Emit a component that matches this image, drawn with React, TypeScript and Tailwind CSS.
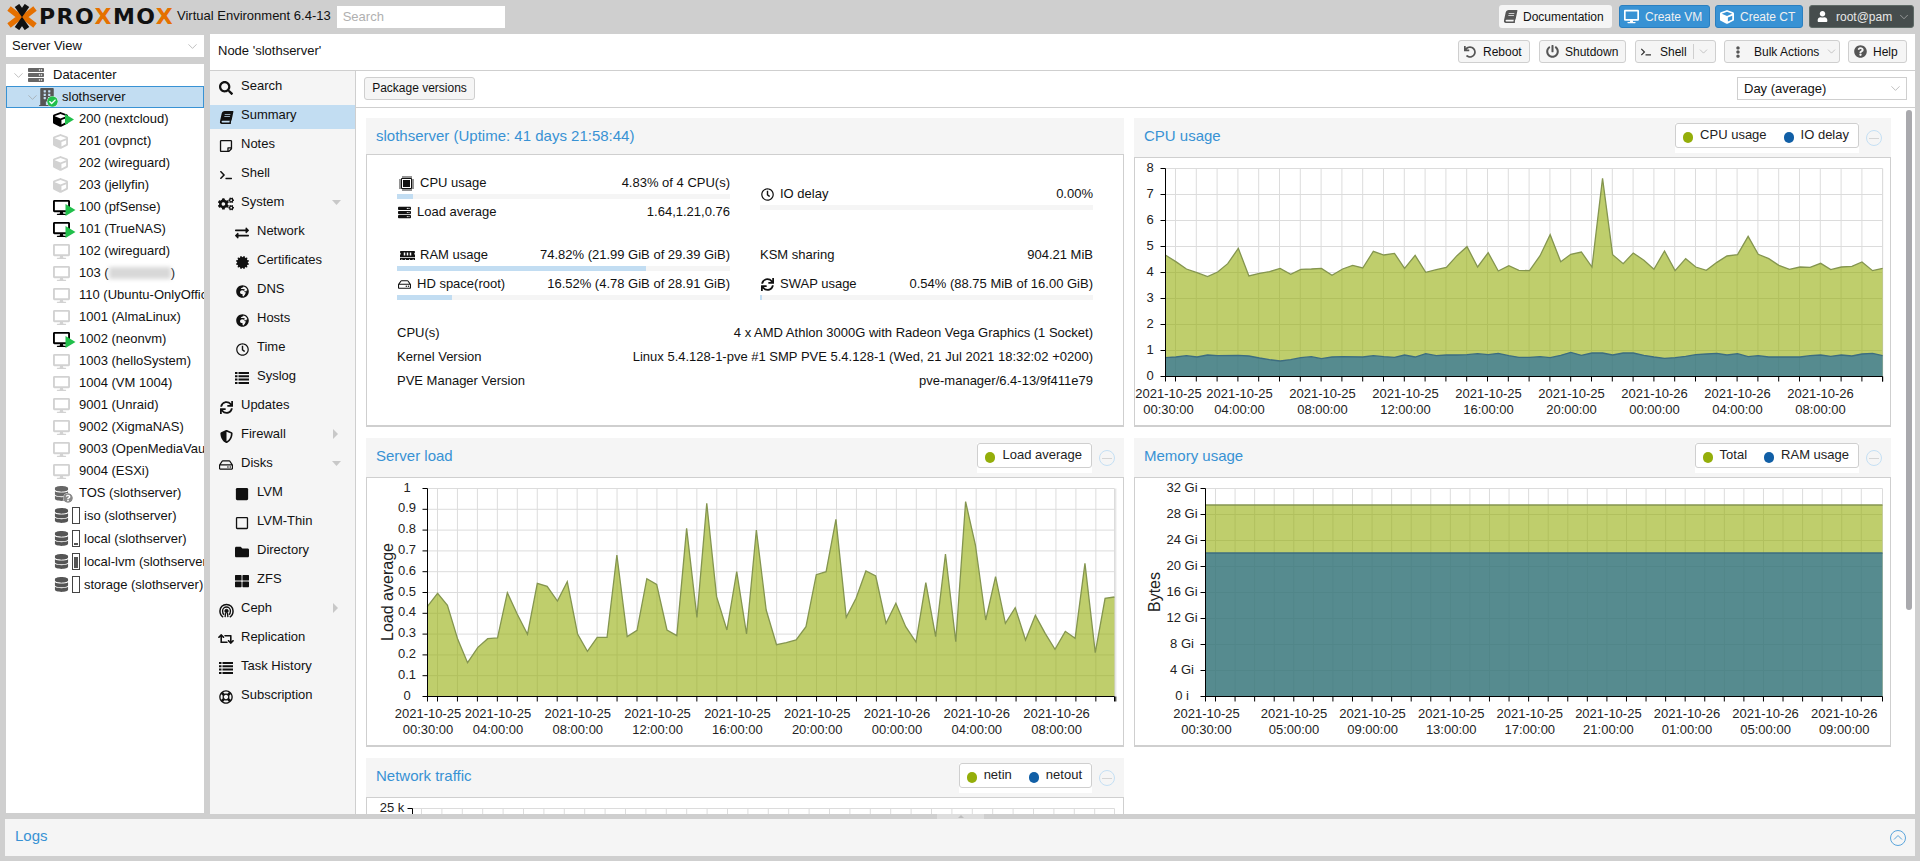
import React from "react";
import { ChevronDown } from "lucide-react";
import {
  FaBook, FaBuilding, FaCertificate, FaCheckCircle, FaCogs, FaCube, FaDatabase, FaDesktop, FaEllipsisV, FaExchangeAlt,
  FaFolder, FaGlobeAfrica, FaMemory, FaPowerOff, FaQuestionCircle, FaRegClock, FaRegHdd,
  FaRegSquare, FaRegStickyNote, FaRetweet, FaSearch, FaServer, FaShieldAlt, FaSquare, FaSync, FaTerminal, FaThLarge,
  FaUndo, FaUser, FaRegLifeRing,
} from "react-icons/fa";

const Chev = ({ className = "" }: { className?: string }) => (
  <ChevronDown size={15} strokeWidth={1} className={"text-[#9a9a9a] shrink-0 " + className} />
);

const Tri = ({ big }: { big?: boolean }) => (
  <svg width={big ? 11 : 9} height={big ? 12 : 11} viewBox="0 0 10 12" className={"absolute " + (big ? "left-[12px] top-[8px]" : "left-[12px] top-[6px]")}>
    <path d="M0 0L10 6L0 12Z" fill="#21bf4b" />
  </svg>
);

const Gauge = ({ fill }: { fill: number }) => (
  <span className="w-[8px] h-[17px] ml-[3px] mr-[4px] border border-[#444] flex flex-col justify-end p-px shrink-0">
    <span className="block bg-[#555] w-full" style={{ height: fill + "%" }} />
  </span>
);

const Row = ({ children, text }: { children: React.ReactNode; text: React.ReactNode }) => (
  <div className="h-[22px] flex items-center pl-[47px] whitespace-nowrap overflow-hidden text-[13px] text-[#111]">
    <span className="relative w-[26px] h-[22px] flex items-center shrink-0">{children}</span>
    <span>{text}</span>
  </div>
);

const CT = ({ on, text }: { on?: boolean; text: string }) => (
  <Row text={text}>
    <FaCube size={15} className={on ? "text-black" : "text-[#d2d2d2]"} />
    {on && <Tri />}
  </Row>
);
const VM = ({ on, text }: { on?: boolean; text: React.ReactNode }) => (
  <Row text={text}>
    <FaDesktop size={17} className={on ? "text-black" : "text-[#d2d2d2]"} />
    {on && <Tri big />}
  </Row>
);
const Store = ({ fill, text }: { fill: number; text: string }) => (
  <div className="h-[23px] flex items-center pl-[48px] whitespace-nowrap overflow-hidden text-[13px] text-[#111]">
    <FaDatabase size={15} className="text-[#555] shrink-0" />
    <Gauge fill={fill} />
    <span>{text}</span>
  </div>
);

function Tree() {
  return (
    <div className="flex-1 mt-[7px] bg-white overflow-hidden">
      <div className="h-[22px] flex items-center text-[13px] text-[#111]">
        <Chev className="ml-[5px]" />
        <FaServer size={16} className="ml-[2px] text-[#666]" />
        <span className="ml-[9px]">Datacenter</span>
      </div>
      <div className="h-[22px] flex items-center bg-[#c2ddf2] border border-[#3892d4] text-[13px] text-[#111]">
        <Chev className="ml-[18px]" />
        <span className="relative w-[24px] h-[20px] ml-[-2px] flex items-center shrink-0">
          <FaBuilding size={18} className="text-[#555]" />
          <FaCheckCircle size={11} className="absolute left-[9px] top-[9px] text-[#21bf4b] bg-white rounded-full" />
        </span>
        <span>slothserver</span>
      </div>
      <CT on text="200 (nextcloud)" />
      <CT text="201 (ovpnct)" />
      <CT text="202 (wireguard)" />
      <CT text="203 (jellyfin)" />
      <VM on text="100 (pfSense)" />
      <VM on text="101 (TrueNAS)" />
      <VM text="102 (wireguard)" />
      <VM text={<span className="flex items-center">103 (<span className="inline-block w-[62px] h-[12px] bg-[#d8d8d8] blur-[2px]" />)</span>} />
      <VM text="110 (Ubuntu-OnlyOffice)" />
      <VM text="1001 (AlmaLinux)" />
      <VM on text="1002 (neonvm)" />
      <VM text="1003 (helloSystem)" />
      <VM text="1004 (VM 1004)" />
      <VM text="9001 (Unraid)" />
      <VM text="9002 (XigmaNAS)" />
      <VM text="9003 (OpenMediaVault)" />
      <VM text="9004 (ESXi)" />
      <Row text="TOS (slothserver)">
        <FaDatabase size={15} className="text-[#666] ml-px" />
        <FaQuestionCircle size={10} className="absolute left-[10px] top-[11px] text-[#8a8a8a] bg-white rounded-full" />
      </Row>
      <Store fill={0} text="iso (slothserver)" />
      <Store fill={15} text="local (slothserver)" />
      <Store fill={85} text="local-lvm (slothserver)" />
      <Store fill={0} text="storage (slothserver)" />
    </div>
  );
}

const CephIcon = () => (
  <svg width="15" height="15" viewBox="0 0 16 16" fill="none" stroke="#111">
    <path d="M4.5 15C1.8 13.6 1 11 1 8.500a7 7 0 0 1 14 0C15 11 14.200 13.600 11.500 15" strokeWidth="1.600" />
    <path d="M5.500 12.500C4 11.500 3.800 10 3.800 8.500a4.200 4.200 0 0 1 8.400 0c0 1.500-.2 3-1.700 4" strokeWidth="1.500" />
    <circle cx="8" cy="8.500" r="1.800" fill="#111" />
    <path d="M7 10.500L6.500 15M9 10.500L9.500 15" strokeWidth="1.400" />
  </svg>
);

const ListIcon = () => (
  <svg width="14" height="12" viewBox="0 0 14 12" fill="#111">
    <path d="M0 0h2.500v2H0zM3.500 0H14v2H3.500zM0 3.300h2.500v2H0zM3.500 3.300H14v2H3.500zM0 6.600h2.500v2H0zM3.500 6.600H14v2H3.500zM0 9.900h2.500v2H0zM3.500 9.900H14v2H3.500z" />
  </svg>
);

const ChipIcon = () => (
  <svg width="15" height="15" viewBox="0 0 15 15">
    <path d="M2.500 2.500h10v10h-10z" fill="none" stroke="#111" strokeWidth="1" />
    <rect x="4" y="4" width="7" height="7" fill="#111" />
    <path d="M4 0v2.500M6 0v2.500M8 0v2.500M10 0v2.500M12 0v2.500M4 12.500V15M6 12.500V15M8 12.500V15M10 12.500V15M12 12.500V15M0 4h2.500M0 6h2.500M0 8h2.500M0 10h2.500M0 12h2.500M12.500 4H15M12.500 6H15M12.500 8H15M12.500 10H15M12.500 12H15" stroke="#111" strokeWidth="0.900" />
  </svg>
);

const menu: [number, React.ReactNode, string, string?][] = [
  [1, <FaSearch size={14} />, "Search"],
  [1, <FaBook size={13} className="-skew-x-[12deg]" />, "Summary"],
  [1, <FaRegStickyNote size={14} />, "Notes"],
  [1, <FaTerminal size={12} />, "Shell"],
  [1, <FaCogs size={16} />, "System", "down"],
  [2, <FaExchangeAlt size={14} />, "Network"],
  [2, <FaCertificate size={13} />, "Certificates"],
  [2, <FaGlobeAfrica size={13} />, "DNS"],
  [2, <FaGlobeAfrica size={13} />, "Hosts"],
  [2, <FaRegClock size={13} />, "Time"],
  [2, <ListIcon />, "Syslog"],
  [1, <FaSync size={13} />, "Updates"],
  [1, <FaShieldAlt size={13} />, "Firewall", "right"],
  [1, <FaRegHdd size={14} />, "Disks", "down"],
  [2, <FaSquare size={14} />, "LVM"],
  [2, <FaRegSquare size={14} />, "LVM-Thin"],
  [2, <FaFolder size={14} />, "Directory"],
  [2, <FaThLarge size={14} />, "ZFS"],
  [1, <CephIcon />, "Ceph", "right"],
  [1, <FaRetweet size={16} />, "Replication"],
  [1, <ListIcon />, "Task History"],
  [1, <FaRegLifeRing size={14} />, "Subscription"],
];

function Menu() {
  return (
    <div className="w-[146px] shrink-0 bg-[#f5f5f5] border-r border-[#cfcfcf] pt-[5px]">
      {menu.map(([lvl, icon, label, arrow]) => (
        <div
          key={label}
          className={
            "relative h-[24px] mb-[5px] flex items-start text-[13px] leading-[20px] text-[#111] " +
            (lvl === 1 ? "pl-[8px] " : "pl-[24px] ") +
            (label === "Summary" ? "bg-[#c2ddf2]" : "")
          }
        >
          <span className="w-[16px] h-[20px] mt-[2px] flex items-center justify-center shrink-0">{icon}</span>
          <span className="ml-[7px]">{label}</span>
          {arrow === "down" && (
            <svg width="9" height="5" viewBox="0 0 9 5" className="absolute left-[122px] top-[8px]">
              <path d="M0 0H9L4.500 5Z" fill="#c8c8c8" />
            </svg>
          )}
          {arrow === "right" && (
            <svg width="5" height="10" viewBox="0 0 5 10" className="absolute left-[123px] top-[5px]">
              <path d="M0 0V10L5 5Z" fill="#c8c8c8" />
            </svg>
          )}
        </div>
      ))}
    </div>
  );
}

const Btn = ({ w, children }: { w: string; children: React.ReactNode }) => (
  <div className={"h-[23px] flex items-center bg-[#f5f5f5] border border-[#cfcfcf] rounded-[3px] text-[12px] text-[#111] whitespace-nowrap " + w}>
    {children}
  </div>
);

type Cell = { icon?: React.ReactNode; label: string; value: string; pct?: number; gap?: string };

const Info = ({ icon, label, value, pct, gap }: Cell) => (
  <div className="w-[333px]">
    <div className="h-[20px] flex items-center text-[13px] text-[#111] whitespace-nowrap">
      {icon && <span className={"flex items-center shrink-0 " + (gap || "w-[20px] pl-px")}>{icon}</span>}
      <span>{label}</span>
      <span className="ml-auto">{value}</span>
    </div>
    {pct !== undefined && (
      <div className="h-[5px] mt-[1px] bg-[#f5f5f5]">
        <div className="h-full bg-[#c2ddf2]" style={{ width: pct + "%" }} />
      </div>
    )}
  </div>
);

function Summary() {
  return (
    <div className="flex-1 border border-[#cfcfcf] border-b-2 pt-[18px] px-[30px] bg-white">
      <div className="grid grid-cols-[333px_333px] gap-x-[30px] h-[72px]">
        <div className="flex flex-col gap-y-[3px]">
          <Info icon={<ChipIcon />} gap="w-[23px] pl-[2px]" label="CPU usage" value="4.83% of 4 CPU(s)" pct={4.83} />
          <Info icon={<FaServer size={13} />} label="Load average" value="1.64,1.21,0.76" />
        </div>
        <div className="pt-[11px]">
          <Info icon={<FaRegClock size={13} />} label="IO delay" value="0.00%" pct={0} />
        </div>
      </div>
      <div className="grid grid-cols-[333px_333px] gap-x-[30px] h-[76px]">
        <div className="flex flex-col gap-y-[3px]">
          <Info icon={<FaMemory size={15} />} gap="w-[23px] pl-[3px]" label="RAM usage" value="74.82% (21.99 GiB of 29.39 GiB)" pct={74.82} />
          <Info icon={<FaRegHdd size={13} />} label="HD space(root)" value="16.52% (4.78 GiB of 28.91 GiB)" pct={16.52} />
        </div>
        <div className="flex flex-col gap-y-[3px]">
          <div className="mb-[6px]"><Info label="KSM sharing" value="904.21 MiB" /></div>
          <Info icon={<FaSync size={13} />} label="SWAP usage" value="0.54% (88.75 MiB of 16.00 GiB)" pct={0.54} />
        </div>
      </div>
      <div className="w-[696px] text-[13px] text-[#111] whitespace-nowrap">
        <div className="h-[24px] flex items-center justify-between"><span>CPU(s)</span><span>4 x AMD Athlon 3000G with Radeon Vega Graphics (1 Socket)</span></div>
        <div className="h-[24px] flex items-center justify-between"><span>Kernel Version</span><span>Linux 5.4.128-1-pve #1 SMP PVE 5.4.128-1 (Wed, 21 Jul 2021 18:32:02 +0200)</span></div>
        <div className="h-[24px] flex items-center justify-between"><span>PVE Manager Version</span><span>pve-manager/6.4-13/9f411e79</span></div>
      </div>
    </div>
  );
}

const Legend = ({ items }: { items: [string, string, string][] }) => (
  <div className="ml-auto mt-[5px] bg-white pb-[5px] self-start">
    <div className="h-[25px] flex items-start border border-[#cfcfcf] rounded-[3px] pl-[7px] pr-[9px] text-[13px] text-[#222] whitespace-nowrap">
      {items.map(([label, color, m]) => (
        <span key={label} className={"flex items-start " + m}>
          <span className="w-[10px] h-[11px] rounded-full mt-[8px] mr-[7px]" style={{ background: color }} />
          <span className="leading-[20px] mt-[1px]">{label}</span>
        </span>
      ))}
    </div>
  </div>
);

const Panel = ({ title, legend, titleH, children }: { title: string; legend?: [string, string, string][]; titleH: string; children: React.ReactNode }) => (
  <div className="flex flex-col h-[309px]">
    <div className={"flex items-start bg-[#f5f5f5] pl-[10px] pr-[9px] shrink-0 " + titleH}>
      <span className="text-[15px] leading-[18px] mt-[9px] text-[#3892d4] whitespace-nowrap">{title}</span>
      {legend && <Legend items={legend} />}
      {legend && (
        <span className="w-[16px] h-[16px] mt-[12px] ml-[7px] rounded-full border border-[#c5e0f4] flex items-center justify-center shrink-0">
          <span className="w-[10px] h-px bg-[#d5d5d5]" />
        </span>
      )}
    </div>
    {children}
  </div>
);

type Pts = number[];
type ChartCfg = {
  x0: number; w: number; y0: number; h: number;
  left: number; right: number; top: number; bottom: number;
  yLabels: string[]; yCx: number; yTitle?: [string, number];
  gridStart: number; gridStep: number; gridN: number;
  xFirst: number; labelStart: number; labelStep: number;
  xLabels: [string, string][];
  series: { pts: [number, number][]; fill: string; stroke: string }[];
};

function Chart(c: ChartCfg) {
  const rows = c.yLabels.length - 1;
  const ys = c.yLabels.map((_, i) => c.bottom - ((c.bottom - c.top) * i) / rows);
  const grid = Array.from({ length: c.gridN }, (_, i) => c.gridStart + i * c.gridStep);
  const area = (p: [number, number][]) =>
    `M${p[0][0]} ${c.bottom} ` + p.map(([x, y]) => `L${x} ${y}`).join(" ") + ` L${p[p.length - 1][0]} ${c.bottom}Z`;
  return (
    <div className="flex-1 border border-[#cfcfcf] border-b-2 bg-white overflow-hidden">
      <svg className="block" width={c.w} height={c.h} viewBox={`${c.x0} ${c.y0} ${c.w} ${c.h}`} fontSize="13" fill="#222">
        {ys.map((y) => (
          <line key={y} x1={c.left} x2={c.right} y1={y} y2={y} stroke="#dcdcdc" />
        ))}
        {grid.map((x) => (
          <line key={x} x1={x} x2={x} y1={c.top} y2={c.bottom} stroke="#dcdcdc" />
        ))}
        <line x1={c.right} x2={c.right} y1={c.top} y2={c.bottom} stroke="#dcdcdc" />
        {c.series.map((s, i) => (
          <path key={i} d={area(s.pts)} fill={s.fill} fillOpacity={0.6} stroke="none" />
        ))}
        {c.series.map((s, i) => (
          <polyline key={i} points={s.pts.map((p) => p.join(",")).join(" ")} fill="none" stroke={s.stroke} strokeWidth={1.300} />
        ))}
        <line x1={c.left} x2={c.left} y1={c.top} y2={c.bottom + 5} stroke="#000" />
        <line x1={c.left} x2={c.right} y1={c.bottom} y2={c.bottom} stroke="#000" />
        {ys.map((y) => (
          <line key={y} x1={c.left - 5} x2={c.left} y1={y} y2={y} stroke="#000" />
        ))}
        {grid.map((x) => (
          <line key={x} x1={x} x2={x} y1={c.bottom} y2={c.bottom + 5} stroke="#000" />
        ))}
        <line x1={c.right} x2={c.right} y1={c.bottom} y2={c.bottom + 5} stroke="#000" />
        {c.yLabels.map((l, i) => (
          <text key={i} x={c.yCx} y={ys[i] + 3} textAnchor="middle">{l}</text>
        ))}
        {c.xLabels.map(([a, b], i) => {
          const x = i === 0 ? c.xFirst : c.labelStart + (i - 1) * c.labelStep;
          return (
            <g key={i} textAnchor="middle">
              <text x={x} y={c.bottom + 21}>{a}</text>
              <text x={x} y={c.bottom + 37}>{b}</text>
            </g>
          );
        })}
        {c.yTitle && (
          <text transform={`translate(${c.yTitle[1]} 592) rotate(-90)`} textAnchor="middle" fontSize="16" dominantBaseline="middle">{c.yTitle[0]}</text>
        )}
      </svg>
    </div>
  );
}

const pairs = (flat: Pts, ox: number, sx: number, oy: number): [number, number][] => {
  const out: [number, number][] = [];
  for (let i = 0; i < flat.length; i += 2) out.push([ox + flat[i] / sx, oy + flat[i + 1] / 3]);
  return out;
};

const cpuG: Pts = [70,435,91,455,112,477,133,488,154,500,174,486,194,461,215,415,236,498,257,490,277,485,298,475,319,493,339,478,360,477,380,475,401,496,422,477,442,466,462,474,483,424,504,435,525,430,545,475,566,436,587,487,608,479,628,472,649,437,669,410,690,471,711,428,731,483,752,467,772,481,793,482,814,437,834,374,855,455,875,433,896,426,917,471,938,205,958,434,979,461,999,429,1020,451,1040,478,1061,423,1082,482,1103,446,1123,471,1144,481,1165,457,1185,438,1206,434,1227,379,1247,433,1268,446,1288,466,1309,478,1330,471,1350,472,1371,460,1391,479,1412,471,1433,469,1453,456,1474,482,1494,475];
const cpuB: Pts = [70,743,91,741,112,737,133,741,154,735,174,737,215,736,236,738,257,744,277,749,298,753,319,749,339,743,360,740,380,746,401,741,422,740,462,741,483,737,504,740,525,742,545,735,566,741,587,731,608,737,628,735,649,735,669,734,690,731,711,734,731,730,752,737,772,742,793,742,814,740,834,743,855,736,875,727,896,736,917,729,938,729,958,735,979,729,999,729,1020,736,1040,741,1061,745,1082,743,1103,739,1123,734,1144,732,1165,730,1185,735,1206,731,1227,740,1247,737,1268,741,1288,741,1330,741,1350,737,1371,735,1391,739,1412,735,1433,738,1453,732,1474,730,1494,737];
const load: Pts = [137,530,158,490,178,526,199,628,219,698,240,652,260,626,280,624,300,488,320,552,341,613,361,460,381,469,402,513,422,455,443,612,463,664,483,622,503,622,523,375,544,620,564,601,584,446,604,463,625,600,645,617,665,295,686,562,706,220,726,500,747,600,767,425,787,612,807,300,827,540,848,644,868,638,888,630,908,590,929,434,949,425,969,268,990,562,1010,505,1030,423,1050,438,1071,580,1091,520,1111,590,1132,636,1152,458,1172,620,1192,372,1213,635,1233,215,1253,345,1274,570,1294,440,1314,580,1334,533,1355,630,1375,556,1395,610,1415,658,1436,604,1456,625,1476,400,1497,668,1517,505,1536,501];

const G = "#94ae0a";
const B = "#115fa6";
const GS = "#84954f";
const BS = "#3d6d80";
const d25 = (t: string): [string, string] => ["2021-10-25", t];
const d26 = (t: string): [string, string] => ["2021-10-26", t];

export default function App() {
  return (
    <div className="relative h-[861px] w-[1920px] overflow-hidden bg-[#cfcfcf] font-['Liberation_Sans',Arial,sans-serif]">
      <header className="h-[34px] flex items-start">
        <svg width="30" height="26" viewBox="0 0 30 26" className="ml-[7px] mt-[4px] shrink-0">
          <path d="M2 4.500L13 13L2 21.500M28 4.500L17 13L28 21.500" fill="none" stroke="#e57000" strokeWidth="5.500" />
          <path d="M10 1.500L15 8.500L20 1.500M10 24.500L15 17.500L20 24.500" fill="none" stroke="#111" strokeWidth="5.500" />
        </svg>
        <span className="ml-[2px] mt-[4px] w-[137px] text-[22px] leading-[26px] font-bold tracking-[1.500px] font-['DejaVu_Sans',sans-serif] text-[#111] whitespace-nowrap">
          PRO<span className="text-[#e57000]">X</span>MO<span className="text-[#e57000]">X</span>
        </span>
        <span className="ml-[1px] mt-[7px] text-[13px] leading-[18px] text-[#111] whitespace-nowrap">Virtual Environment 6.4-13</span>
        <div className="ml-[6px] mt-[6px] w-[168px] h-[22px] bg-white text-[13px] leading-[22px] pl-[6px] text-[#b0b0b0]">Search</div>
        <div className="ml-auto mr-[6px] mt-[5px] flex items-start text-[12px] whitespace-nowrap">
          <div className="w-[113px] h-[23px] bg-[#f5f5f5] rounded-[3px] flex items-center pl-[5px] text-[#111]">
            <FaBook size={13} className="text-[#555] -skew-x-[12deg]" /><span className="ml-[6px]">Documentation</span>
          </div>
          <div className="ml-[7px] w-[91px] h-[23px] bg-[#3892d4] border border-[#2a7fc0] rounded-[3px] flex items-center pl-[4px] text-[#f0f0f0]">
            <FaDesktop size={15} className="text-white" /><span className="ml-[6px]">Create VM</span>
          </div>
          <div className="ml-[5px] w-[88px] h-[23px] bg-[#3892d4] border border-[#2a7fc0] rounded-[3px] flex items-center pl-[4px] text-[#f0f0f0]">
            <FaCube size={14} className="text-white" /><span className="ml-[6px]">Create CT</span>
          </div>
          <div className="ml-[6px] w-[105px] h-[23px] bg-[#464d4d] border border-[#5e6a66] rounded-[3px] flex items-center pl-[7px] text-[#e8e8e8]">
            <FaUser size={11} className="text-white" /><span className="ml-[8px]">root@pam</span>
            <ChevronDown size={14} strokeWidth={1} className="ml-[5px] text-[#ccc]" />
          </div>
        </div>
      </header>

      <div className="flex h-[780px]">
        <div className="ml-[6px] w-[198px] flex flex-col pb-px">
          <div className="mt-px h-[22px] bg-white flex items-center pl-[6px] pr-[4px] text-[13px] text-[#111]">
            <span>Server View</span><Chev className="ml-auto" />
          </div>
          <Tree />
        </div>
        <div className="ml-[6px] w-[1705px] flex flex-col bg-white">
          <div className="h-[37px] shrink-0 border-b border-[#cfcfcf] flex items-start pt-[6px]">
            <span className="ml-[8px] mt-[1px] text-[13px] leading-[20px] text-[#111]">Node 'slothserver'</span>
            <div className="ml-auto mr-[8px] flex items-start">
              <Btn w="w-[72px] pl-[5px]"><FaUndo size={12} className="text-[#555]" /><span className="ml-[7px]">Reboot</span></Btn>
              <div className="ml-[9px]"><Btn w="w-[87px] pl-[6px]"><FaPowerOff size={13} className="text-[#555]" /><span className="ml-[6px]">Shutdown</span></Btn></div>
              <div className="ml-[9px]"><Btn w="w-[81px] pl-[5px]"><FaTerminal size={10} className="text-[#333]" /><span className="ml-[9px]">Shell</span><span className="ml-[6px] w-px h-[15px] bg-[#cfcfcf]" /><ChevronDown size={13} strokeWidth={1} className="ml-[3px] text-[#9a9a9a]" /></Btn></div>
              <div className="ml-[8px]"><Btn w="w-[116px] pl-[7px]"><FaEllipsisV size={12} className="text-[#555]" /><span className="ml-[10px]">Bulk Actions</span><ChevronDown size={13} strokeWidth={1} className="ml-[6px] text-[#9a9a9a]" /></Btn></div>
              <div className="ml-[8px]"><Btn w="w-[59px] pl-[5px]"><FaQuestionCircle size={13} className="text-[#555]" /><span className="ml-[6px]">Help</span></Btn></div>
            </div>
          </div>
          <div className="flex-1 flex min-h-0">
            <Menu />
            <div className="flex-1 min-w-0 flex flex-col">
              <div className="h-[37px] shrink-0 border-b border-[#cfcfcf] flex items-start pt-[6px]">
                <div className="ml-[8px] w-[111px] h-[23px] bg-[#f5f5f5] border border-[#cfcfcf] rounded-[3px] text-[12px] leading-[20px] text-center text-[#111]">Package versions</div>
                <div className="ml-auto mr-[8px] w-[170px] h-[23px] bg-white border border-[#cfcfcf] flex items-center pl-[6px] pr-[3px] text-[13px] text-[#111]">
                  <span>Day (average)</span><Chev className="ml-auto" />
                </div>
              </div>
              <div className="relative flex-1 overflow-hidden pl-[10px] pt-[10px]">
                <div className="grid grid-cols-[758px_757px] gap-x-[10px] gap-y-[11px]">
                  <Panel title="slothserver (Uptime: 41 days 21:58:44)" titleH="h-[36px]">
                    <Summary />
                  </Panel>
                  <Panel title="CPU usage" titleH="h-[39px]" legend={[["CPU usage", G, ""], ["IO delay", B, "ml-[17px]"]]}>
                    <Chart
                      x0={1135} w={755} y0={158} h={267} left={1165.500} right={1882.500} top={168.500} bottom={376.500}
                      yLabels={["0","1","2","3","4","5","6","7","8"]} yCx={1150}
                      gridStart={1175.500} gridStep={20.800} gridN={35}
                      xFirst={1168.500} labelStart={1239.500} labelStep={83}
                      xLabels={[d25("00:30:00"),d25("04:00:00"),d25("08:00:00"),d25("12:00:00"),d25("16:00:00"),d25("20:00:00"),d26("00:00:00"),d26("04:00:00"),d26("08:00:00")]}
                      series={[{ pts: pairs(cpuG, 1130, 1.985, 110), fill: G, stroke: GS }, { pts: pairs(cpuB, 1130, 1.985, 110), fill: B, stroke: BS }]}
                    />
                  </Panel>
                  <Panel title="Server load" titleH="h-[39px]" legend={[["Load average", G, ""]]}>
                    <Chart
                      x0={367} w={756} y0={478} h={267} left={427.500} right={1114.500} top={488.500} bottom={696.500}
                      yLabels={["0","0.1","0.2","0.3","0.4","0.5","0.6","0.7","0.8","0.9","1"]} yCx={407} yTitle={["Load average", 388.500]}
                      gridStart={437.500} gridStep={19.950} gridN={35}
                      xFirst={428} labelStart={498} labelStep={79.800}
                      xLabels={[d25("00:30:00"),d25("04:00:00"),d25("08:00:00"),d25("12:00:00"),d25("16:00:00"),d25("20:00:00"),d26("00:00:00"),d26("04:00:00"),d26("08:00:00")]}
                      series={[{ pts: pairs(load, 360, 2.036, 430), fill: G, stroke: GS }]}
                    />
                  </Panel>
                  <Panel title="Memory usage" titleH="h-[39px]" legend={[["Total", G, ""], ["RAM usage", B, "ml-[17px]"]]}>
                    <Chart
                      x0={1135} w={755} y0={478} h={267} left={1205.500} right={1882.500} top={488.500} bottom={696.500}
                      yLabels={["0 i","4 Gi","8 Gi","12 Gi","16 Gi","20 Gi","24 Gi","28 Gi","32 Gi"]} yCx={1182} yTitle={["Bytes", 1156]}
                      gridStart={1215.500} gridStep={19.570} gridN={34}
                      xFirst={1206.500} labelStart={1294} labelStep={78.600}
                      xLabels={[d25("00:30:00"),d25("05:00:00"),d25("09:00:00"),d25("13:00:00"),d25("17:00:00"),d25("21:00:00"),d26("01:00:00"),d26("05:00:00"),d26("09:00:00")]}
                      series={[{ pts: [[1205.500,505],[1882.500,505]], fill: G, stroke: GS }, { pts: [[1205.500,553],[1882.500,553]], fill: B, stroke: BS }]}
                    />
                  </Panel>
                  <Panel title="Network traffic" titleH="h-[39px]" legend={[["netin", G, ""], ["netout", B, "ml-[17px]"]]}>
                    <Chart
                      x0={367} w={756} y0={798} h={267} left={412.500} right={1114.500} top={808.500} bottom={1016.500}
                      yLabels={["0","5 k","10 k","15 k","20 k","25 k"]} yCx={392}
                      gridStart={421.500} gridStep={20.400} gridN={34}
                      xFirst={413} labelStart={480} labelStep={81.600}
                      xLabels={[]}
                      series={[]}
                    />
                  </Panel>
                </div>
                <div className="absolute right-[3px] top-[2px] w-[6px] h-[500px] rounded-[3px] bg-[#a9a9ad]" />
              </div>
            </div>
          </div>
        </div>
      </div>

      <div className="relative h-[5px]">
        <div className="absolute left-[937px] top-0 w-[47px] h-[5px] bg-[#dedede] flex items-center justify-center">
          <svg width="6" height="3" viewBox="0 0 6 3"><path d="M0 3L3 0L6 3Z" fill="#bdbdbd" /></svg>
        </div>
      </div>
      <div className="mx-[5px] h-[37px] bg-[#f5f5f5] flex items-center pl-[10px] pr-[9px]">
        <span className="text-[15px] text-[#3892d4] -mt-[3px]">Logs</span>
        <svg width="16" height="16" viewBox="0 0 16 16" className="ml-auto" fill="none" stroke="#5aa5dc">
          <circle cx="8" cy="8" r="7.500" />
          <path d="M4 9.500L8 5.500L12 9.500" />
        </svg>
      </div>
    </div>
  );
}
